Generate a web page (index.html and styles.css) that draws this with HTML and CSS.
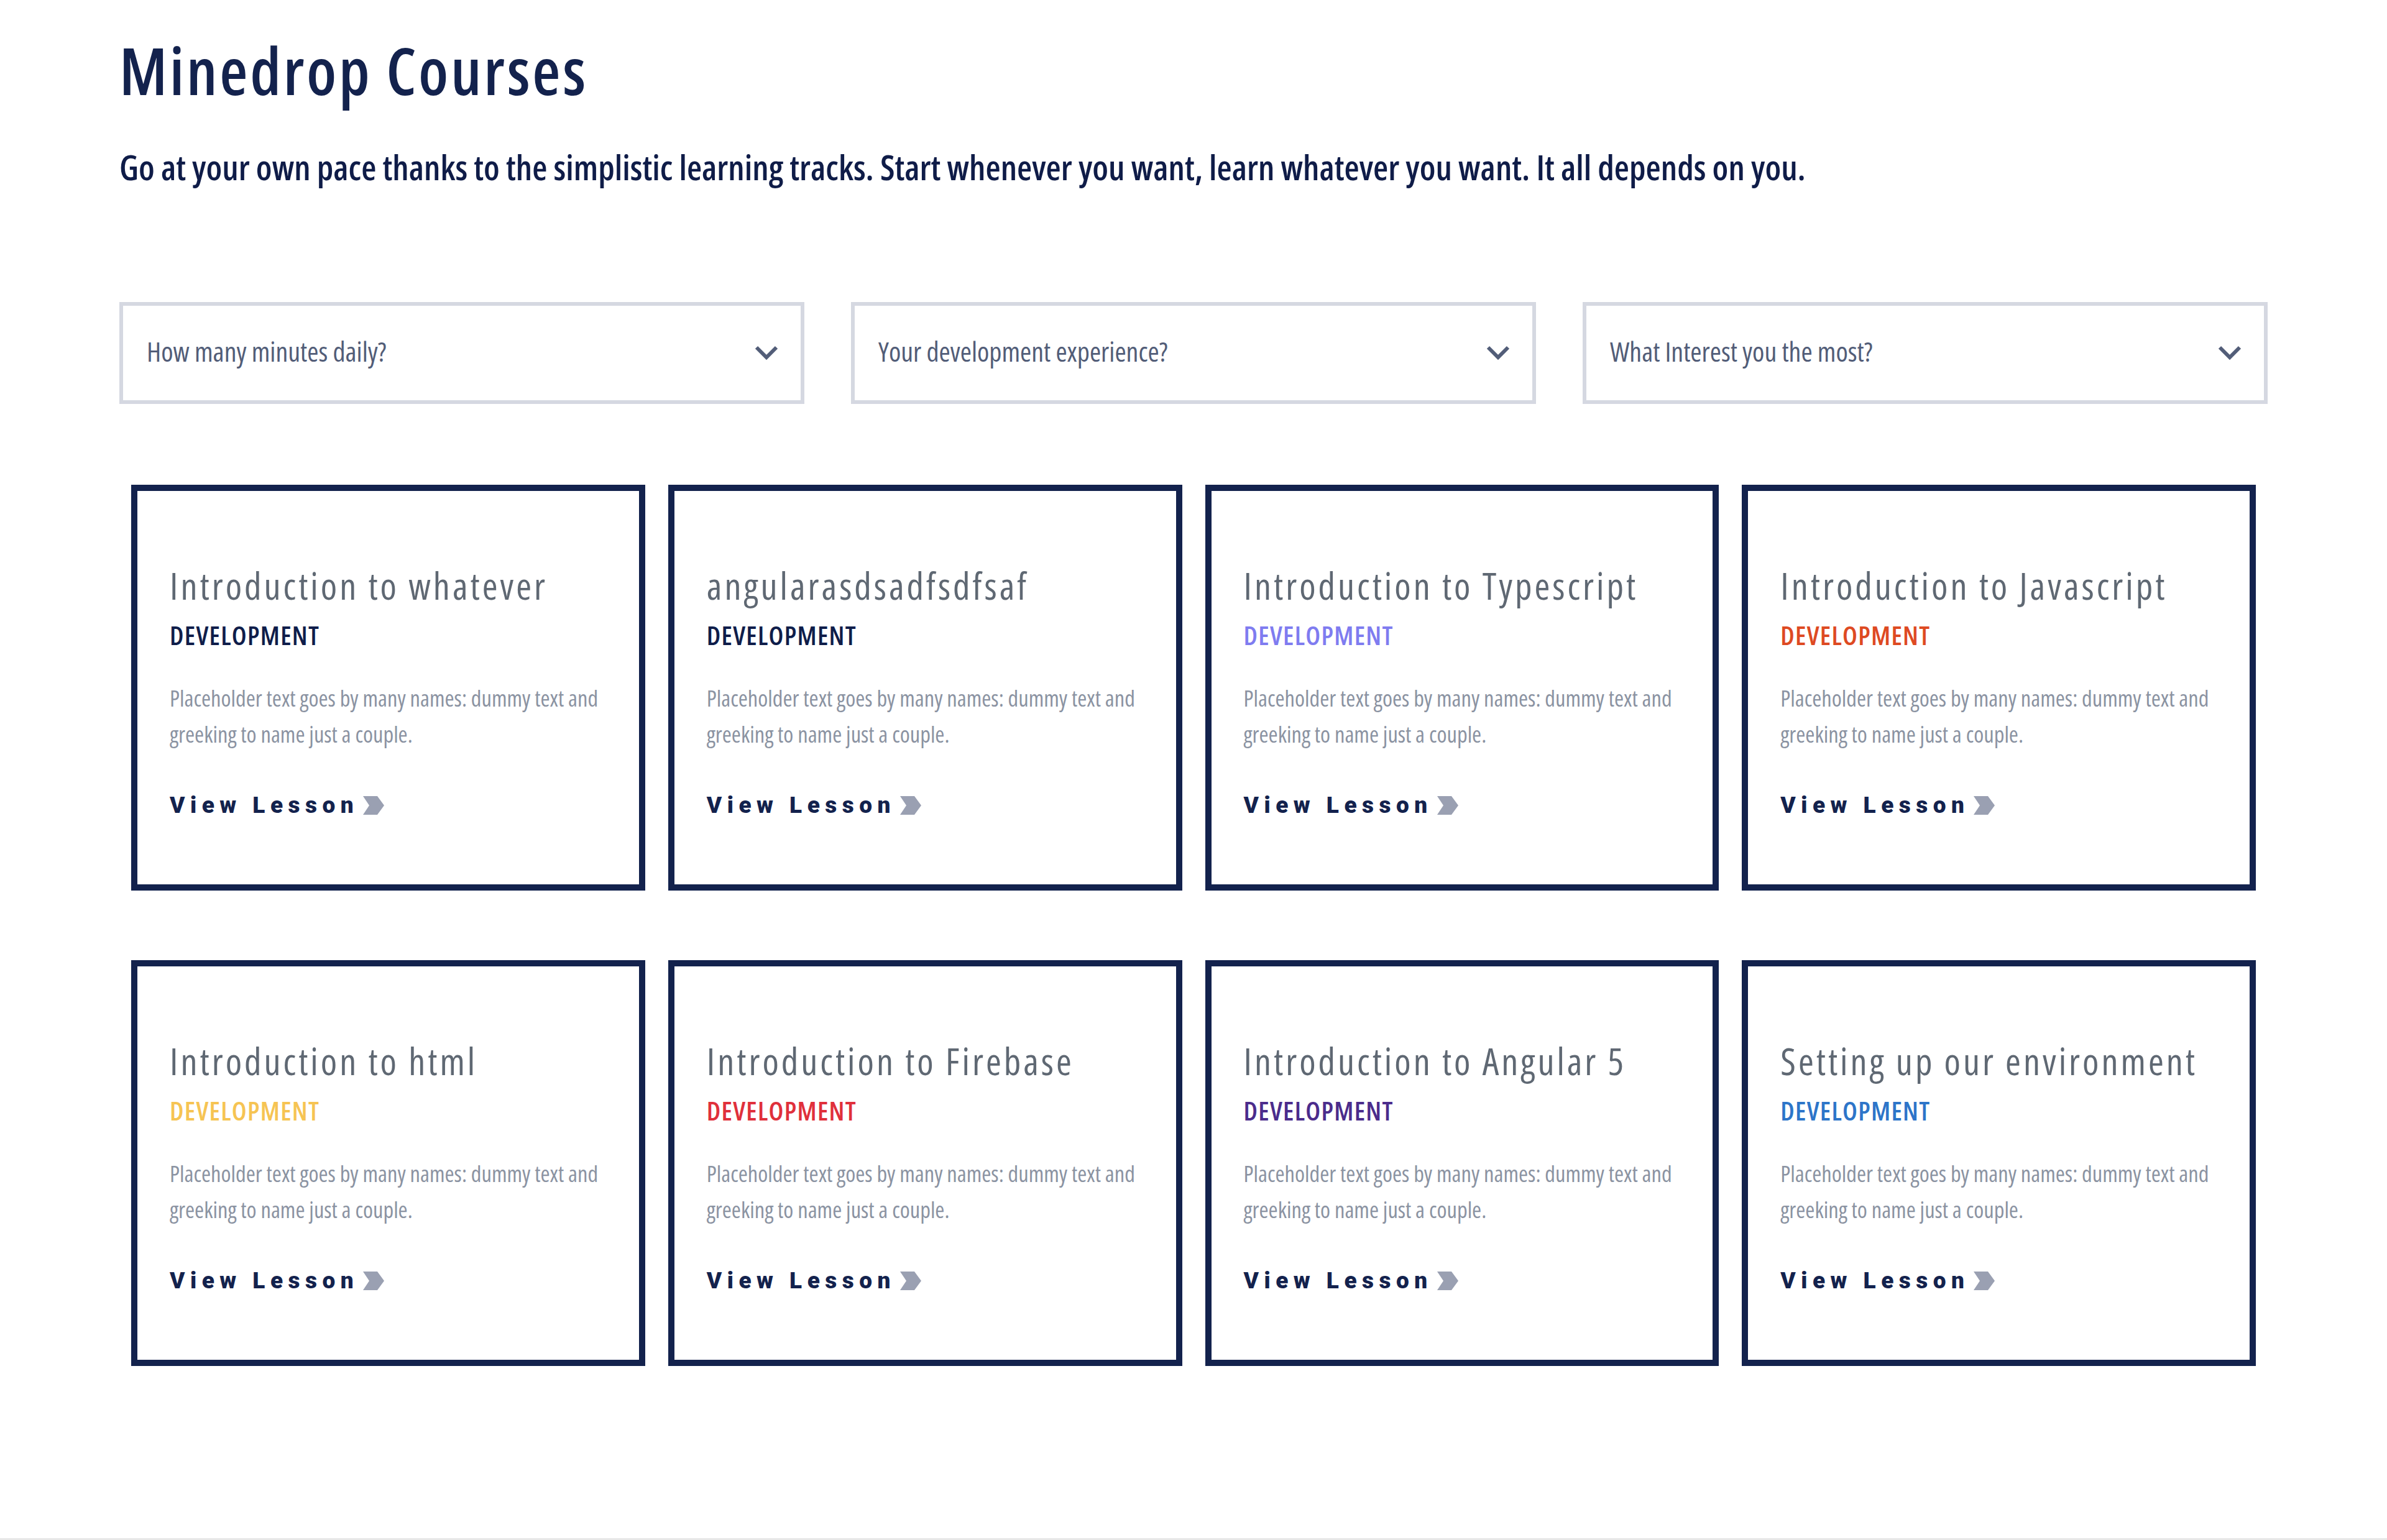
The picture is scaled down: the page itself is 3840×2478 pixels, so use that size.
FILE: index.html
```html
<!DOCTYPE html>
<html lang="en">
<head>
    <meta charset="UTF-8">
    <meta name="viewport" content="width=device-width, initial-scale=1.0">
    <title>Minedrop Courses</title>
    <link rel="stylesheet" href="styles.css">
</head>
<body>
    <div class="page">
        <div class="container">
            <h1 class="page-title">Minedrop Courses</h1>
            <p class="intro">Go at your own pace thanks to the simplistic learning tracks. Start whenever you want, learn whatever you want. It all depends on you.</p>

            <div class="filters">
                <div class="select">
                    <span>How many minutes daily?</span>
                    <svg viewBox="0 0 40 26" class="caret"><polyline points="4,4 20,20 36,4"></polyline></svg>
                </div>
                <div class="select">
                    <span>Your development experience?</span>
                    <svg viewBox="0 0 40 26" class="caret"><polyline points="4,4 20,20 36,4"></polyline></svg>
                </div>
                <div class="select">
                    <span>What Interest you the most?</span>
                    <svg viewBox="0 0 40 26" class="caret"><polyline points="4,4 20,20 36,4"></polyline></svg>
                </div>
            </div>

            <div class="courses">
                <div class="card">
                    <h3>Introduction to whatever</h3>
                    <h4 class="tag">DEVELOPMENT</h4>
                    <p>Placeholder text goes by many names: dummy text and greeking to name just a couple.</p>
                    <a class="lesson">View Lesson <svg viewBox="0 0 35 30"><polygon points="1,0 24,0 35,15 24,30 1,30 11,15"></polygon></svg></a>
                </div>
                <div class="card">
                    <h3>angularasdsadfsdfsaf</h3>
                    <h4 class="tag">DEVELOPMENT</h4>
                    <p>Placeholder text goes by many names: dummy text and greeking to name just a couple.</p>
                    <a class="lesson">View Lesson <svg viewBox="0 0 35 30"><polygon points="1,0 24,0 35,15 24,30 1,30 11,15"></polygon></svg></a>
                </div>
                <div class="card">
                    <h3>Introduction to Typescript</h3>
                    <h4 class="tag purple">DEVELOPMENT</h4>
                    <p>Placeholder text goes by many names: dummy text and greeking to name just a couple.</p>
                    <a class="lesson">View Lesson <svg viewBox="0 0 35 30"><polygon points="1,0 24,0 35,15 24,30 1,30 11,15"></polygon></svg></a>
                </div>
                <div class="card">
                    <h3>Introduction to Javascript</h3>
                    <h4 class="tag orange">DEVELOPMENT</h4>
                    <p>Placeholder text goes by many names: dummy text and greeking to name just a couple.</p>
                    <a class="lesson">View Lesson <svg viewBox="0 0 35 30"><polygon points="1,0 24,0 35,15 24,30 1,30 11,15"></polygon></svg></a>
                </div>
                <div class="card">
                    <h3>Introduction to html</h3>
                    <h4 class="tag yellow">DEVELOPMENT</h4>
                    <p>Placeholder text goes by many names: dummy text and greeking to name just a couple.</p>
                    <a class="lesson">View Lesson <svg viewBox="0 0 35 30"><polygon points="1,0 24,0 35,15 24,30 1,30 11,15"></polygon></svg></a>
                </div>
                <div class="card">
                    <h3>Introduction to Firebase</h3>
                    <h4 class="tag red">DEVELOPMENT</h4>
                    <p>Placeholder text goes by many names: dummy text and greeking to name just a couple.</p>
                    <a class="lesson">View Lesson <svg viewBox="0 0 35 30"><polygon points="1,0 24,0 35,15 24,30 1,30 11,15"></polygon></svg></a>
                </div>
                <div class="card">
                    <h3>Introduction to Angular 5</h3>
                    <h4 class="tag violet">DEVELOPMENT</h4>
                    <p>Placeholder text goes by many names: dummy text and greeking to name just a couple.</p>
                    <a class="lesson">View Lesson <svg viewBox="0 0 35 30"><polygon points="1,0 24,0 35,15 24,30 1,30 11,15"></polygon></svg></a>
                </div>
                <div class="card">
                    <h3>Setting up our environment</h3>
                    <h4 class="tag blue">DEVELOPMENT</h4>
                    <p>Placeholder text goes by many names: dummy text and greeking to name just a couple.</p>
                    <a class="lesson">View Lesson <svg viewBox="0 0 35 30"><polygon points="1,0 24,0 35,15 24,30 1,30 11,15"></polygon></svg></a>
                </div>
            </div>
        </div>
    </div>

    <footer class="footer"></footer>
</body>
</html>
```

FILE: styles.css
```css
body {
    margin : 0;
    font-family : "Open Sans", sans-serif;
    font-stretch : 75%;
    background-color: #fff;
    color : #13224d;
}

.page {
    padding-bottom: 277px;
}

.container {
    width : 3456px;
    margin : 0 auto;
}

.page-title {
    margin : 0;
    padding-top : 53px;
    font-size : 104px;
    line-height : 120px;
    font-weight : 600;
    letter-spacing: 3.7px;
    color : #13224d;
}

.intro {
    margin : 66px 0 0;
    font-size : 55.5px;
    line-height : 60px;
    font-weight : 600;
    color : #0f1c48;
}

.filters {
    display : grid;
    grid-template-columns: repeat(3, minmax(0, 1fr));
    gap : 75px;
    margin-top : 187px;
}

.select {
    height : 152px;
    border : 6px solid #d5d8e1;
    display : flex;
    align-items : center;
    justify-content: space-between;
    padding : 0 35px 0 38px;
    color : #525d78;
    font-size : 44px;
}

.select span {
    margin-bottom : 6px;
}

.caret {
    width : 40px;
    height : 26px;
}

.caret polyline {
    fill : none;
    stroke : #525d78;
    stroke-width: 6;
}

.courses {
    display : grid;
    grid-template-columns: repeat(4, minmax(0, 1fr));
    column-gap : 37px;
    row-gap : 112px;
    padding : 0 19px;
    margin-top : 130px;
}

.card {
    border : 10px solid #13224d;
    padding : 117px 20px 107px 52px;
}

.card h3 {
    margin : 0;
    font-size : 60px;
    line-height : 70px;
    font-weight : 500;
    letter-spacing: 4px;
    color : #5f6873;
    white-space : nowrap;
}

.tag {
    margin : 23px 0 0;
    font-size : 42px;
    line-height : 44px;
    font-weight : 600;
    letter-spacing: 1.3px;
    color : #0f1d4a;
}

.purple { color : #7f7cf0; }
.orange { color : #de4a22; }
.yellow { color : #f6c453; }
.red { color : #e0303b; }
.violet { color : #4b2c8c; }
.blue { color : #2d75c9; }

.card p {
    margin : 50px 0 0;
    font-size : 36.5px;
    line-height : 58px;
    color : #8b93a2;
}

.lesson {
    display : flex;
    align-items : center;
    margin-top : 66px;
    font-family : Roboto, "Liberation Sans", sans-serif;
    font-stretch : normal;
    font-size : 37px;
    line-height : 40px;
    font-weight : 900;
    letter-spacing: 8.5px;
    color : #13224d;
    white-space : nowrap;
}

.lesson svg {
    width : 35px;
    height : 30px;
    margin-left : 6px;
}

.lesson polygon {
    fill : #9aa0b2;
}

.footer {
    border-top : 3px solid #e8e8e8;
}
```
